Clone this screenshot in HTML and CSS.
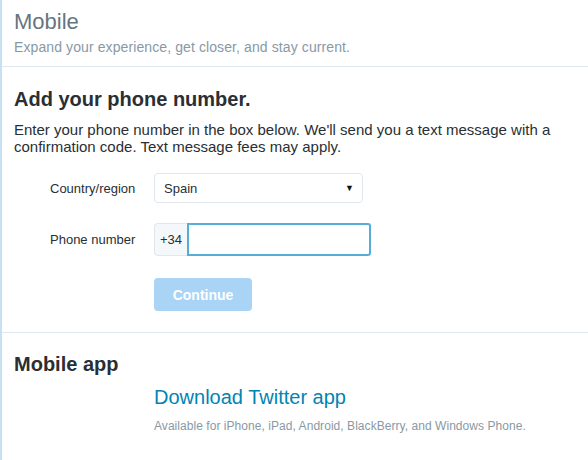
FILE: index.html
```html
<!DOCTYPE html>
<html>
<head>
<meta charset="utf-8">
<link rel="stylesheet" href="styles.css">
</head>
<body>
<div class="panel">
  <div class="header">
    <h1 class="title">Mobile</h1>
    <p class="subtitle">Expand your experience, get closer, and stay current.</p>
  </div>
  <div class="section phone">
    <h2 class="heading">Add your phone number.</h2>
    <p class="intro">Enter your phone number in the box below. We'll send you a text message with a confirmation code. Text message fees may apply.</p>
    <div class="form">
      <label class="label">Country/region</label>
      <div class="select"><span>Spain</span><span class="caret">&#9660;</span></div>
      <label class="label label-phone">Phone number</label>
      <div class="phone-field"><span class="prefix">+34</span><span class="input"></span></div>
      <span></span>
      <div><button class="btn">Continue</button></div>
    </div>
  </div>
  <div class="section app">
    <h2 class="heading">Mobile app</h2>
    <div class="app-body">
      <a class="app-link">Download Twitter app</a>
      <p class="app-note">Available for iPhone, iPad, Android, BlackBerry, and Windows Phone.</p>
    </div>
  </div>
</div>
</body>
</html>
```
FILE: styles.css
```css
html, body { margin: 0; padding: 0; background: #fff; }
body { font-family: "Liberation Sans", Arial, sans-serif; color: #292f33; }
.panel {
  border-left: 2px solid #c6e2f2;
  min-height: 460px;
  box-sizing: border-box;
}
.header {
  padding: 9px 12px 10px;
  border-bottom: 1px solid #e1e8ed;
}
.title {
  margin: 0;
  font-size: 22px;
  font-weight: normal;
  color: #66757f;
  line-height: 26px;
}
.subtitle {
  margin: 3px 0 0;
  font-size: 14px;
  line-height: 18px;
  letter-spacing: 0.1px;
  color: #8899a6;
}
.section { padding: 0 12px; }
.phone { border-bottom: 1px solid #e1e8ed; padding-top: 20px; padding-bottom: 21px; }
.heading {
  margin: 0;
  font-size: 20px;
  font-weight: bold;
  line-height: 24px;
  color: #292f33;
}
.intro {
  margin: 10px 0 0;
  font-size: 15px;
  line-height: 17px;
  color: #292f33;
}
.form {
  display: grid;
  grid-template-columns: 104px 217px;
  margin: 18px 0 0 36px;
  align-items: center;
}
.label { font-size: 13px; color: #292f33; }
.label-phone { margin-top: 19px; }
.select {
  height: 30px;
  width: 209px;
  box-sizing: border-box;
  border: 1px solid #e1e8ed;
  border-radius: 4px;
  display: flex;
  align-items: center;
  justify-content: space-between;
  padding: 0 8px 0 9px;
  font-size: 13px;
  color: #292f33;
}
.caret { font-size: 9px; color: #111; }
.phone-field { display: flex; height: 33px; margin-top: 20px; }
.prefix {
  width: 33px;
  box-sizing: border-box;
  border: 1px solid #e1e8ed;
  border-right: none;
  border-radius: 4px 0 0 4px;
  background: #f5f8fa;
  font-size: 13px;
  display: flex;
  align-items: center;
  justify-content: center;
}
.input {
  width: 184px;
  box-sizing: border-box;
  border: 2px solid #56aed6;
  border-radius: 0 3px 3px 0;
  background: #fff;
}
.btn {
  display: block;
  margin-top: 22px;
  width: 98px;
  height: 33px;
  border: none;
  border-radius: 4px;
  background: #a9d4f5;
  color: #fff;
  font-family: "Liberation Sans", Arial, sans-serif;
  font-size: 14px;
  font-weight: bold;
  padding: 0;
}
.app { padding-top: 19px; }
.app-body { margin-left: 140px; margin-top: 9px; }
.app-link {
  display: block;
  font-size: 20px;
  line-height: 24px;
  color: #0084b4;
}
.app-note {
  margin: 10px 0 0;
  font-size: 12px;
  line-height: 14px;
  letter-spacing: 0.05px;
  color: #8899a6;
}
```
